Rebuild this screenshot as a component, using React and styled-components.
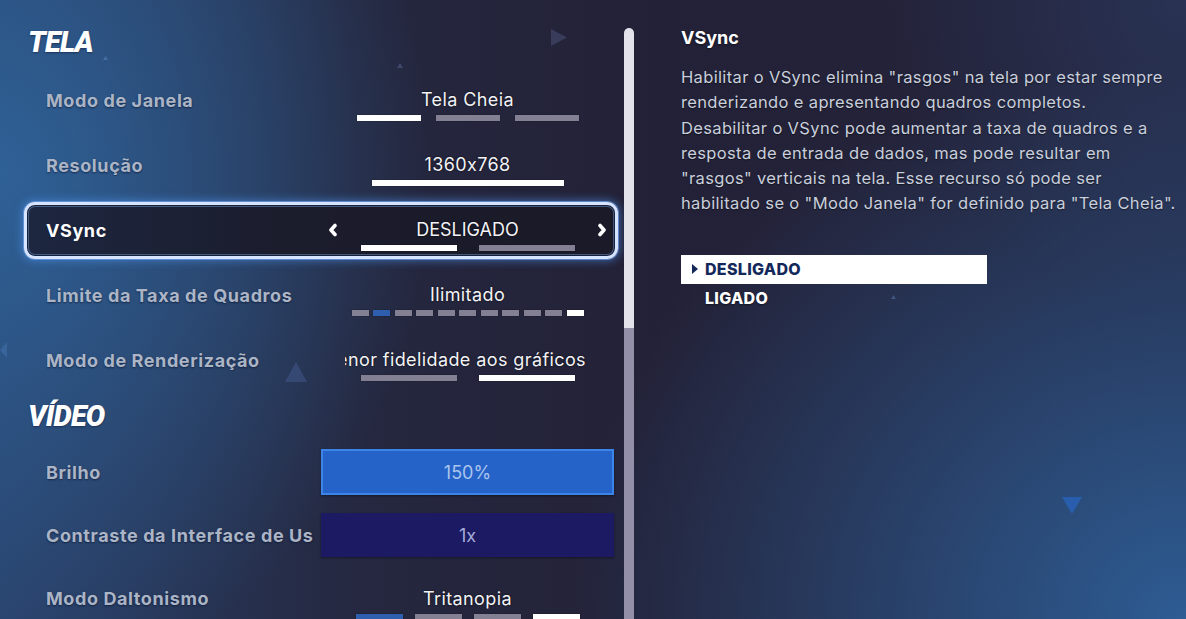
import React from "react";
import styled, { createGlobalStyle } from "styled-components";

const Global = createGlobalStyle`
  html, body { margin: 0; padding: 0; background: #23223a; overflow: hidden; }
  #root { width: 1186px; height: 619px; }
  * { box-sizing: border-box; }
`;

const Page = styled.div`
  position: relative;
  width: 1186px;
  height: 619px;
  overflow: hidden;
  display: flex;
  font-family: Inter, "Noto Sans", sans-serif;
  background:
    radial-gradient(ellipse 430px 520px at 0% 28%, rgba(47, 98, 152, 0.95), rgba(47, 98, 152, 0) 100%),
    radial-gradient(ellipse 620px 560px at 100% 100%, rgba(46, 95, 152, 0.95), rgba(46, 95, 152, 0) 100%),
    radial-gradient(ellipse 300px 300px at 100% 0%, rgba(44, 60, 100, 0.6), rgba(44, 60, 100, 0) 100%),
    linear-gradient(90deg, #29416a 0%, #252840 30%, #232137 55%, #24243c 100%);
`;

const LeftPanel = styled.div`
  width: 640px;
  height: 100%;
  display: flex;
  align-items: flex-start;
  flex-shrink: 0;
`;

const Content = styled.div`
  width: 620px;
  flex-shrink: 0;
  padding: 24px 0 0 22px;
  display: flex;
  flex-direction: column;
`;

const SectionHeading = styled.h2`
  margin: 0;
  flex-shrink: 0;
  height: 36px;
  padding-left: 6px;
  display: flex;
  align-items: center;
  font-family: Roboto, "Liberation Sans", sans-serif;
  font-weight: 900;
  font-style: italic;
  font-size: 29px;
  letter-spacing: -0.8px;
  color: #ffffff;
  text-shadow: 0 1px 2px rgba(10, 20, 50, 0.5);
  margin-top: ${(p) => p.$mt || 0}px;
  margin-bottom: ${(p) => p.$mb || 0}px;
`;

const Row = styled.div`
  flex-shrink: 0;
  height: ${(p) => p.$h}px;
  display: flex;
  align-items: center;
  padding: 0 2px;
`;

const RowBox = styled.div`
  flex: 1;
  height: ${(p) => p.$h}px;
  display: grid;
  grid-template-columns: 268px 293px;
  column-gap: 7px;
  padding-left: 19px;
  border: 3px solid transparent;
  border-radius: 11px;
  ${(p) =>
    p.$focused &&
    `
    border-color: #d6e4ff;
    background: linear-gradient(90deg, #1d2740 0%, #1b1c2c 45%, #1a1a28 100%);
    box-shadow:
      0 0 0 1px rgba(110, 160, 230, 0.7),
      0 0 9px 2px rgba(80, 150, 240, 0.55),
      inset 0 0 0 1px #16213a,
      inset 0 0 0 2px rgba(120, 160, 220, 0.45);
  `}
`;

const Label = styled.div`
  align-self: center;
  white-space: nowrap;
  overflow: hidden;
  font-weight: 700;
  font-size: 18px;
  letter-spacing: 0.6px;
  color: ${(p) => (p.$focused ? "#ffffff" : "#abb5c6")};
  text-shadow: 0 1px 2px rgba(8, 18, 48, 0.65);
`;

const Selector = styled.div`
  display: grid;
  grid-template-columns: 24px 245px 24px;
  align-items: start;
`;

const Chevron = styled.div`
  height: 20px;
  margin-top: 15.5px;
  display: flex;
  align-items: center;
  justify-content: center;
`;

const ValueColumn = styled.div`
  padding-top: 15.5px;
  display: flex;
  flex-direction: column;
  align-items: center;
  min-width: 0;
`;

const ValueText = styled.div`
  width: 100%;
  height: 20px;
  line-height: 20px;
  display: flex;
  justify-content: ${(p) => (p.$marquee ? "flex-end" : "center")};
  padding-right: ${(p) => (p.$marquee ? 4 : 0)}px;
  overflow: hidden;
  white-space: nowrap;
  font-size: 18px;
  font-weight: 400;
  letter-spacing: ${(p) => (p.$upper ? 0 : 0.4)}px;
  color: #f3f3f7;
  text-shadow: 0 0 2px rgba(0, 0, 0, 0.85);
  & > span { flex-shrink: 0; }
`;

const Bars = styled.div`
  margin-top: 4.5px;
  display: flex;
  gap: ${(p) => p.$gap}px;
`;

const Bar = styled.div`
  width: ${(p) => p.$w}px;
  height: 6px;
  background: ${(p) => p.$color};
  box-shadow: 0 0 1px rgba(0, 0, 0, 0.6);
`;

const SliderBox = styled.div`
  align-self: center;
  height: ${(p) => p.$h}px;
  display: flex;
  align-items: center;
  justify-content: center;
  font-size: 18px;
  font-weight: 400;
  color: ${(p) => p.$text};
  background: ${(p) => p.$bg};
  border: ${(p) => (p.$border ? `2px solid ${p.$border}` : "none")};
  box-shadow: 0 1px 2px rgba(0, 0, 0, 0.4);
`;

const Scrollbar = styled.div`
  margin: 28px 0 0 4px;
  width: 10px;
  height: 591px;
  display: flex;
  flex-direction: column;
`;

const Thumb = styled.div`
  height: 300px;
  background: #e3e1ea;
  border-radius: 5px 5px 0 0;
`;

const Track = styled.div`
  flex: 1;
  background: #938fa8;
`;

const RightPanel = styled.div`
  flex: 1;
  padding: 27px 0 0 41px;
  display: flex;
  flex-direction: column;
`;

const InfoTitle = styled.h3`
  margin: 0;
  height: 22px;
  line-height: 22px;
  font-size: 18px;
  font-weight: 700;
  color: #ffffff;
  text-shadow: 0 1px 2px rgba(0, 0, 0, 0.5);
`;

const InfoText = styled.p`
  margin: 16px 0 0;
  width: 505px;
  font-size: 16.5px;
  line-height: 25.3px;
  letter-spacing: 0.35px;
  color: #c9cfdc;
  text-shadow: 0 1px 1px rgba(0, 0, 0, 0.5);
`;

const OptionList = styled.ul`
  list-style: none;
  margin: 38px 0 0;
  padding: 0;
  width: 306px;
`;

const OptionItem = styled.li`
  height: 29px;
  display: flex;
  align-items: center;
  padding-left: 11px;
  gap: 7px;
  font-size: 16px;
  font-weight: 800;
  letter-spacing: 0.3px;
  background: ${(p) => (p.$active ? "#ffffff" : "transparent")};
  color: ${(p) => (p.$active ? "#14285a" : "#ffffff")};
  text-shadow: ${(p) => (p.$active ? "none" : "0 1px 2px rgba(0,0,0,0.5)")};
`;

const Caret = styled.span`
  width: 6px;
  height: 10px;
  display: inline-block;
  visibility: ${(p) => (p.$show ? "visible" : "hidden")};
  border-left: 6px solid #14285a;
  border-top: 5px solid transparent;
  border-bottom: 5px solid transparent;
`;

const Deco = styled.svg`
  position: absolute;
  left: ${(p) => p.$x}px;
  top: ${(p) => p.$y}px;
  pointer-events: none;
`;

const ChevronIcon = ({ dir }) => (
  <svg width="10" height="14" viewBox="0 0 10 14">
    <polyline
      points={dir === "left" ? "7,2.5 3,7 7,11.5" : "3,2.5 7,7 3,11.5"}
      fill="none"
      stroke="#ffffff"
      strokeWidth="3.6"
      strokeLinecap="round"
      strokeLinejoin="round"
    />
  </svg>
);

const W = "#ffffff";
const G = "#828092";
const B = "#2e5fae";

const OptionRow = ({ label, value, bars, gap, focused, marquee, upper, h = 65 }) => (
  <Row $h={h}>
    <RowBox $h={h - 8} $focused={focused}>
      <Label $focused={focused}>{label}</Label>
      <Selector>
        <Chevron>{focused && <ChevronIcon dir="left" />}</Chevron>
        <ValueColumn>
          <ValueText $marquee={marquee} $upper={upper}>
            <span>{value}</span>
          </ValueText>
          <Bars $gap={gap}>
            {bars.map((b, i) => (
              <Bar key={i} $w={b.w} $color={b.c} />
            ))}
          </Bars>
        </ValueColumn>
        <Chevron>{focused && <ChevronIcon dir="right" />}</Chevron>
      </Selector>
    </RowBox>
  </Row>
);

const SliderRow = ({ label, value, bg, text, border }) => (
  <Row $h={63}>
    <RowBox $h={55}>
      <Label>{label}</Label>
      <SliderBox $h={border ? 46 : 44} $bg={bg} $text={text} $border={border}>
        {value}
      </SliderBox>
    </RowBox>
  </Row>
);

const tri = (w, h, dir) => {
  if (dir === "up") return `${w / 2},0 ${w},${h} 0,${h}`;
  if (dir === "down") return `0,0 ${w},0 ${w / 2},${h}`;
  if (dir === "right") return `0,0 ${w},${h / 2} 0,${h}`;
  return `${w},0 ${w},${h} 0,${h / 2}`;
};

const Triangle = ({ x, y, w, h, dir, color }) => (
  <Deco $x={x} $y={y} width={w} height={h} viewBox={`0 0 ${w} ${h}`}>
    <polygon points={tri(w, h, dir)} fill={color} />
  </Deco>
);

export default function App() {
  const limite = Array.from({ length: 11 }, (_, i) => ({
    w: 17,
    c: i === 1 ? B : i === 10 ? W : G,
  }));
  return (
    <>
      <Global />
      <Page>
        <Triangle x={551} y={29} w={16} h={17} dir="right" color="rgba(110,125,175,0.28)" />
        <Triangle x={397} y={63} w={6} h={5} dir="up" color="rgba(110,130,180,0.35)" />
        <Triangle x={103} y={56} w={5} h={4} dir="up" color="rgba(90,140,200,0.5)" />
        <Triangle x={285} y={362} w={22} h={20} dir="up" color="rgba(70,95,150,0.45)" />
        <Triangle x={0} y={342} w={7} h={16} dir="left" color="rgba(70,120,180,0.45)" />
        <Triangle x={1062} y={497} w={20} h={17} dir="down" color="rgba(40,100,190,0.75)" />
        <Triangle x={891} y={295} w={5} h={4} dir="up" color="rgba(90,120,180,0.5)" />
        <LeftPanel>
          <Content>
            <SectionHeading $mb={7.5}>TELA</SectionHeading>
            <OptionRow
              label="Modo de Janela"
              value="Tela Cheia"
              gap={15}
              bars={[{ w: 64, c: W }, { w: 64, c: G }, { w: 64, c: G }]}
            />
            <OptionRow label="Resolução" value="1360x768" gap={0} bars={[{ w: 192, c: W }]} />
            <OptionRow
              label="VSync"
              value="DESLIGADO"
              upper
              focused
              gap={22}
              bars={[{ w: 96, c: W }, { w: 96, c: G }]}
            />
            <OptionRow label="Limite da Taxa de Quadros" value="Ilimitado" gap={4.5} bars={limite} />
            <OptionRow
              label="Modo de Renderização"
              value="Desempenho - Menor fidelidade aos gráficos"
              marquee
              gap={22}
              bars={[{ w: 96, c: G }, { w: 96, c: W }]}
            />
            <SectionHeading $mt={5.5} $mb={6.5}>VÍDEO</SectionHeading>
            <SliderRow label="Brilho" value="150%" bg="#2563c8" text="#aac4ee" border="#3b84ea" />
            <SliderRow
              label="Contraste da Interface de Usuário"
              value="1x"
              bg="#1b1a62"
              text="#a5abd8"
            />
            <OptionRow
              h={63}
              label="Modo Daltonismo"
              value="Tritanopia"
              gap={12}
              bars={[{ w: 47, c: B }, { w: 47, c: G }, { w: 47, c: G }, { w: 47, c: W }]}
            />
          </Content>
          <Scrollbar>
            <Thumb />
            <Track />
          </Scrollbar>
        </LeftPanel>
        <RightPanel>
          <InfoTitle>VSync</InfoTitle>
          <InfoText>
            Habilitar o VSync elimina "rasgos" na tela por estar sempre
            <br />
            renderizando e apresentando quadros completos.
            <br />
            Desabilitar o VSync pode aumentar a taxa de quadros e a
            <br />
            resposta de entrada de dados, mas pode resultar em
            <br />
            "rasgos" verticais na tela. Esse recurso só pode ser
            <br />
            habilitado se o "Modo Janela" for definido para "Tela Cheia".
          </InfoText>
          <OptionList>
            <OptionItem $active>
              <Caret $show />
              DESLIGADO
            </OptionItem>
            <OptionItem>
              <Caret />
              LIGADO
            </OptionItem>
          </OptionList>
        </RightPanel>
      </Page>
    </>
  );
}
